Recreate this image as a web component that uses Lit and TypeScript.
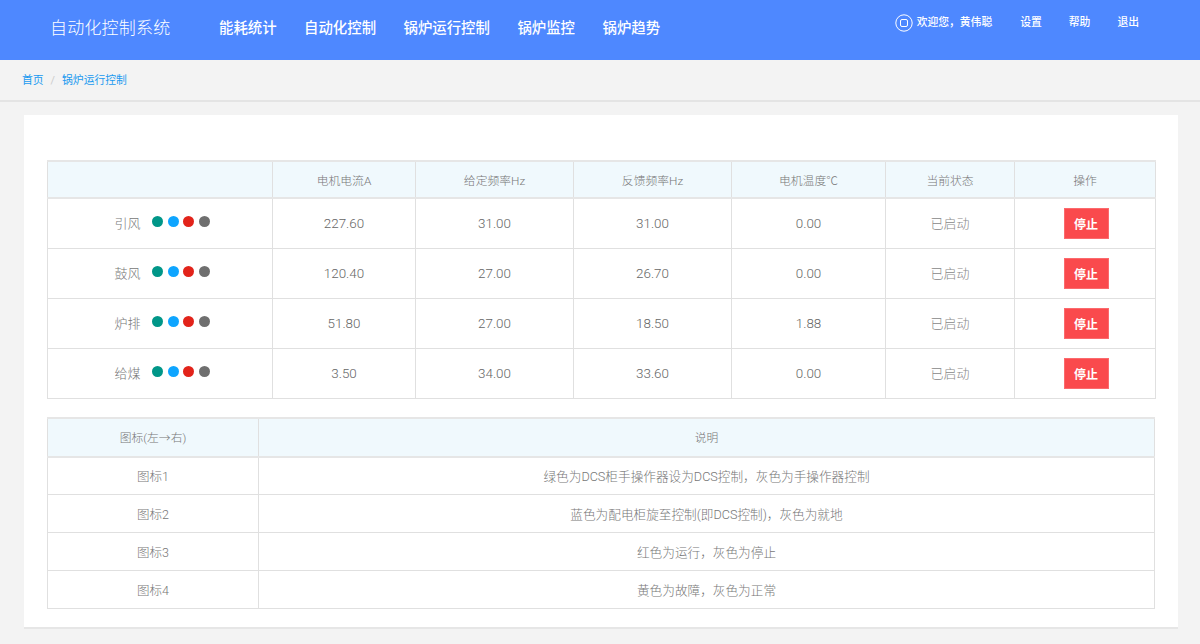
import { LitElement, html, css } from "lit";
import { customElement } from "lit/decorators.js";

const motors = [
  ["引风", "227.60", "31.00", "31.00", "0.00"],
  ["鼓风", "120.40", "27.00", "26.70", "0.00"],
  ["炉排", "51.80", "27.00", "18.50", "1.88"],
  ["给煤", "3.50", "34.00", "33.60", "0.00"],
];
const legend = [
  ["图标1", "绿色为DCS柜手操作器设为DCS控制，灰色为手操作器控制"],
  ["图标2", "蓝色为配电柜旋至控制(即DCS控制)，灰色为就地"],
  ["图标3", "红色为运行，灰色为停止"],
  ["图标4", "黄色为故障，灰色为正常"],
];

@customElement("app-root")
export class AppRoot extends LitElement {
  static styles = css`
    :host { display: block; min-height: 644px; background: #f3f3f3; color: #777;
      font-family: Roboto, "Noto Sans CJK SC", sans-serif; font-size: 13px; }
    * { box-sizing: border-box; }
    header { height: 60px; background: #4e88ff; color: #fff; display: flex; padding-left: 50px; }
    .brand { font-size: 17px; font-weight: 300; line-height: 56px; width: 169px; letter-spacing: 0.2px; }
    nav { display: flex; gap: 27.5px; font-size: 14.4px; font-weight: 500; line-height: 57px; }
    .user { margin-left: auto; display: flex; align-items: flex-start; font-size: 10.8px; font-weight: 500;
      padding: 14px 61px 0 0; line-height: 17px; }
    .user svg { width: 18px; height: 18px; margin-right: 3.4px; }
    .user .welcome { margin-right: 28px; }
    .user .link { margin-right: 27px; }
    .user .link:last-child { margin-right: 0; }
    .crumbs { height: 42px; border-bottom: 2px solid #e4e4e4; padding-left: 22px; line-height: 42px;
      font-size: 10.8px; color: #1a9af0; }
    .crumbs .sep { color: #ccc; margin: 0 7px 0 7px; }
    .card { margin: 13px 22px 16px 24px; height: 514px; background: #fff; border-bottom: 2px solid #e6e6e6;
      padding: 45px 23px 0 23px; display: flex; flex-direction: column; gap: 18px; }
    table { border-collapse: collapse; table-layout: fixed; width: 1108px; }
    th, td { border: 1px solid #e0e0e0; text-align: center; padding: 0; font-weight: 400; }
    th { background: #f0f9fd; font-size: 11.8px; font-weight: 300; height: 37px; color: #777; }
    tr.top th { border-top: 2px solid #e6e6e6; }
    th { border-bottom: 2px solid #e6e6e6; }
    .t1 td { height: 50px; font-size: 13px; }
    .t1 .num { font-size: 13.4px; font-weight: 300; color: #666; }
    .t2 th { height: 39px; padding-bottom: 2px; }
    .t2 td { height: 38px; font-size: 12.5px; font-weight: 300; color: #777; }
    .t2 td.desc { font-size: 12.65px; }
    .c1 { width: 225px; } .c2 { width: 143px; } .c3 { width: 158px; } .c4 { width: 158px; }
    .c5 { width: 154px; } .c6 { width: 129px; } .c7 { width: 141px; }
    .k1 { width: 211px; }
    .name-wrap { display: inline-flex; align-items: center; padding-left: 4px; }
    .name { font-weight: 300; color: #777; margin-right: 12px; margin-bottom: 2px; }
    .dots { display: inline-flex; gap: 4.4px; position: relative; top: -1.5px; }
    .dot { width: 11px; height: 11px; border-radius: 50%; }
    .g { background: #009688; } .b { background: #0ea5ff; } .r { background: #e2231a; } .s { background: #6f6f6f; }
    .t1 td.state { font-weight: 300; color: #888; padding-bottom: 2px; }
    .stop { display: inline-flex; align-items: center; justify-content: center; width: 45px; height: 31px; margin-left: 2px;
      background: #fa4a4d; color: #fff; font-size: 12px; font-weight: 700; border: 1px solid #fb6a6d; vertical-align: middle; }
  `;

  render() {
    return html`
      <header>
        <div class="brand">自动化控制系统</div>
        <nav>
          <span>能耗统计</span><span>自动化控制</span><span>锅炉运行控制</span><span>锅炉监控</span><span>锅炉趋势</span>
        </nav>
        <div class="user">
          <svg viewBox="0 0 18 18" fill="none" stroke="#fff" stroke-width="1">
            <circle cx="9" cy="9" r="8.2"></circle>
            <rect x="5.5" y="5.5" width="7" height="7" rx="1.5"></rect>
          </svg>
          <span class="welcome">欢迎您，黄伟聪</span>
          <span class="link">设置</span><span class="link">帮助</span><span class="link">退出</span>
        </div>
      </header>
      <div class="crumbs"><span>首页</span><span class="sep">/</span><span>锅炉运行控制</span></div>
      <div class="card">
        <table class="t1">
          <colgroup>
            <col class="c1" /><col class="c2" /><col class="c3" /><col class="c4" /><col class="c5" /><col class="c6" /><col class="c7" />
          </colgroup>
          <tr class="top">
            <th></th><th>电机电流A</th><th>给定频率Hz</th><th>反馈频率Hz</th><th>电机温度℃</th><th>当前状态</th><th>操作</th>
          </tr>
          ${motors.map(
            (m) => html`<tr>
              <td>
                <span class="name-wrap">
                  <span class="name">${m[0]}</span>
                  <span class="dots"><i class="dot g"></i><i class="dot b"></i><i class="dot r"></i><i class="dot s"></i></span>
                </span>
              </td>
              <td class="num">${m[1]}</td><td class="num">${m[2]}</td><td class="num">${m[3]}</td><td class="num">${m[4]}</td>
              <td class="state">已启动</td>
              <td><span class="stop">停止</span></td>
            </tr>`
          )}
        </table>
        <table class="t2">
          <colgroup><col class="k1" /><col /></colgroup>
          <tr class="top"><th>图标(左→右)</th><th>说明</th></tr>
          ${legend.map((l) => html`<tr><td>${l[0]}</td><td class="desc">${l[1]}</td></tr>`)}
        </table>
      </div>
    `;
  }
}
